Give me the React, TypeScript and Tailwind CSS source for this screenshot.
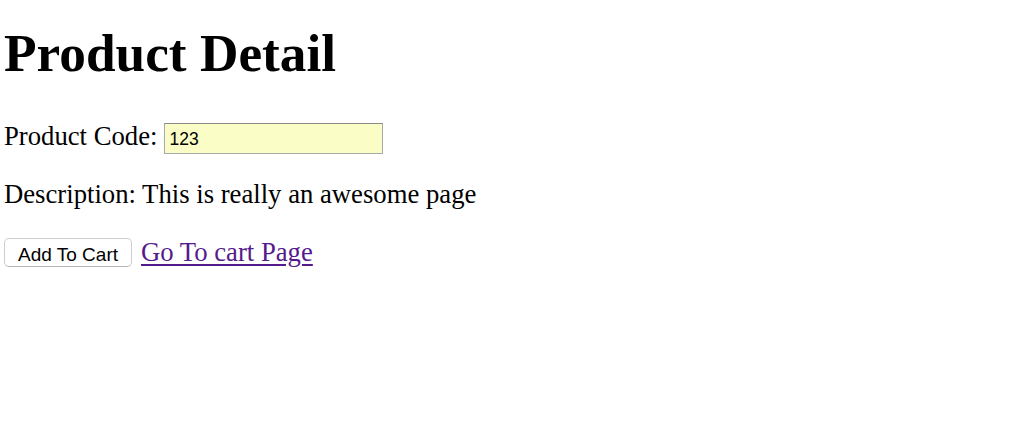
import React from "react";

export default function App() {
  return (
    <div className="min-h-[424px] w-full bg-white pl-[4px] text-black font-['Liberation_Serif',serif]">
      <h1 className="pt-[24px] text-[53.3px] leading-[60px] font-bold">Product Detail</h1>
      <div className="mt-[37px] flex h-[32px] items-baseline text-[26.7px] leading-[30px]">
        <span>Product Code:</span>
        <input
          readOnly
          value="123"
          className="ml-[7px] h-[31px] w-[219px] border border-[#a9a9a9] border-t-[#8a8a8a] bg-[#fafdc6] pl-[4px] pt-[3px] text-[17.5px] leading-[20px] font-['Liberation_Sans',Arial,sans-serif] text-black outline-none"
        />
      </div>
      <p className="mt-[26px] text-[26.7px] leading-[30px]">Description: This is really an awesome page</p>
      <div className="mt-[28px] flex items-baseline text-[26.7px] leading-[30px]">
        <button className="flex h-[29px] w-[128px] items-baseline justify-center rounded-[5px] border border-[#cdcdcd] border-b-[#b5b5b5] bg-white pt-[5px] text-[19px] leading-[21px] font-['Liberation_Sans',Arial,sans-serif] text-black">
          Add To Cart
        </button>
        <a href="#" className="ml-[9px] text-[#551a8b] underline underline-offset-[3px]">
          Go To cart Page
        </a>
      </div>
    </div>
  );
}
